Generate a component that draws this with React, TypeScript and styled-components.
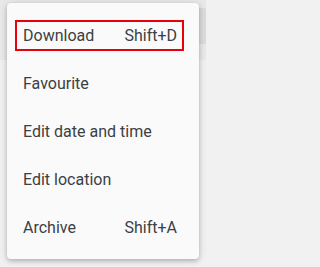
import React from 'react';
import styled, { createGlobalStyle } from 'styled-components';

const GlobalStyle = createGlobalStyle`
    html, body {
        margin: 0;
        padding: 0;
        background: #f1f1f1;
        font-family: Roboto, "Noto Sans", sans-serif;
    }
`;

const Page = styled.div`
    position: relative;
    width: 100%;
    min-height: 100vh;
    overflow: hidden;
    background: #f1f1f1;
`;

const TopBar = styled.header`
    width: 206px;
    height: 60px;
    background: #e9e9e9;
    display: flex;
    align-items: center;
    justify-content: flex-end;
    overflow: hidden;
`;

const SearchPill = styled.div`
    flex-shrink: 0;
    width: 60px;
    height: 36px;
    margin-right: -30px;
    margin-top: -8px;
    border-radius: 18px;
    background: #dcdcdc;
`;

const Menu = styled.ul`
    position: absolute;
    top: 3px;
    left: 7px;
    width: 192px;
    margin: 0;
    padding: 8px 0;
    list-style: none;
    background: #fafafa;
    border-radius: 4px;
    box-shadow: 0 2px 4px rgba(0, 0, 0, 0.2), 0 1px 10px rgba(0, 0, 0, 0.12);
    box-sizing: border-box;
`;

const Item = styled.li`
    height: 48px;
    display: flex;
    align-items: center;
    padding: 0 15px 0 8px;
`;

const Row = styled.div<{ $focused?: boolean }>`
    flex: 1;
    height: 31px;
    box-sizing: border-box;
    display: flex;
    align-items: center;
    justify-content: space-between;
    padding: 0 5px 0 6px;
    border: 2px solid ${(p) => (p.$focused ? '#e8000b' : 'transparent')};
    font-size: 16px;
    color: #3c4043;
`;

const Label = styled.span``;

const Shortcut = styled.span`
    color: #3c4043;
`;

const items = [
    { label: 'Download', shortcut: 'Shift+D' },
    { label: 'Favourite' },
    { label: 'Edit date and time' },
    { label: 'Edit location' },
    { label: 'Archive', shortcut: 'Shift+A' },
];

const App: React.FC = () => {
    return (
        <Page>
            <GlobalStyle />
            <TopBar>
                <SearchPill />
            </TopBar>
            <Menu>
                {items.map((it, i) => (
                    <Item key={it.label}>
                        <Row $focused={i === 0}>
                            <Label>{it.label}</Label>
                            {it.shortcut && <Shortcut>{it.shortcut}</Shortcut>}
                        </Row>
                    </Item>
                ))}
            </Menu>
        </Page>
    );
};

export default App;
